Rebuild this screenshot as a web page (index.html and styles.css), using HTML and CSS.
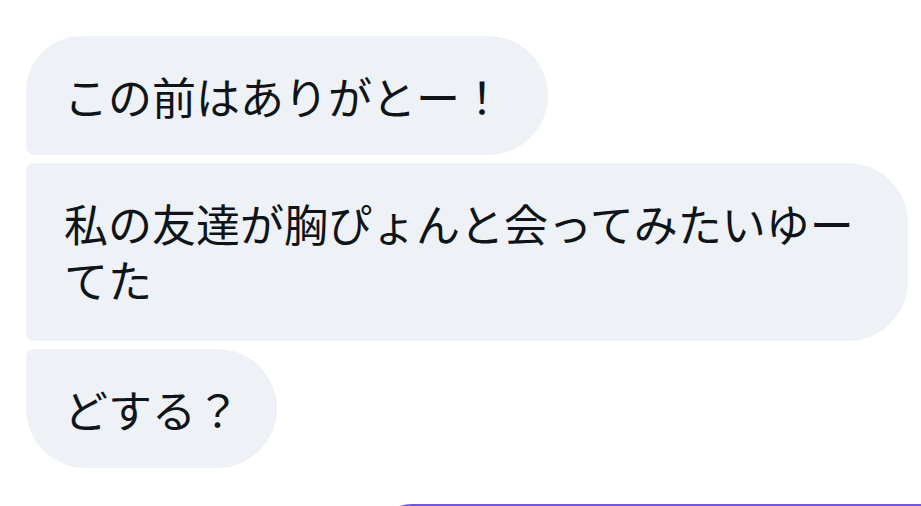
FILE: index.html
```html
<!DOCTYPE html>
<html lang="ja">
<head>
<meta charset="utf-8">
<link rel="stylesheet" href="styles.css">
</head>
<body>
<div class="chat">
  <div class="group">
    <div class="bubble first">この前はありがとー！</div>
    <div class="bubble middle">私の友達が胸ぴょんと会ってみたいゆーてた</div>
    <div class="bubble last">どする？</div>
  </div>
  <div class="sent"></div>
</div>
</body>
</html>
```

FILE: styles.css
```css
html, body {
  margin: 0;
  padding: 0;
  background: #ffffff;
  width: 921px;
  height: 506px;
  overflow: hidden;
}

.chat {
  display: flex;
  flex-direction: column;
  box-sizing: border-box;
  height: 506px;
  overflow: hidden;
  padding: 36px 0 0 26px;
  font-family: "Noto Sans CJK JP", "Noto Sans", sans-serif;
  color: #0f1419;
}

.group {
  display: flex;
  flex-direction: column;
  align-items: flex-start;
  gap: 8px;
}

.bubble {
  background: #eef1f5;
  font-size: 44px;
  line-height: 56px;
  padding: 32px 40px 31px 38px;
  max-width: 804px;
  border-radius: 60px;
}

.first {
  border-radius: 56px 60px 60px 8px;
  padding-right: 44px;
}

.middle {
  border-radius: 8px 60px 60px 8px;
  width: 804px;
  padding-bottom: 34px;
}

.last {
  border-radius: 8px 60px 60px 60px;
  padding-right: 37px;
}

.sent {
  flex: none;
  margin-top: 36px;
  margin-left: 346px;
  height: 40px;
  background: #7356e0;
  border-radius: 40px 0 0 0;
}
```
